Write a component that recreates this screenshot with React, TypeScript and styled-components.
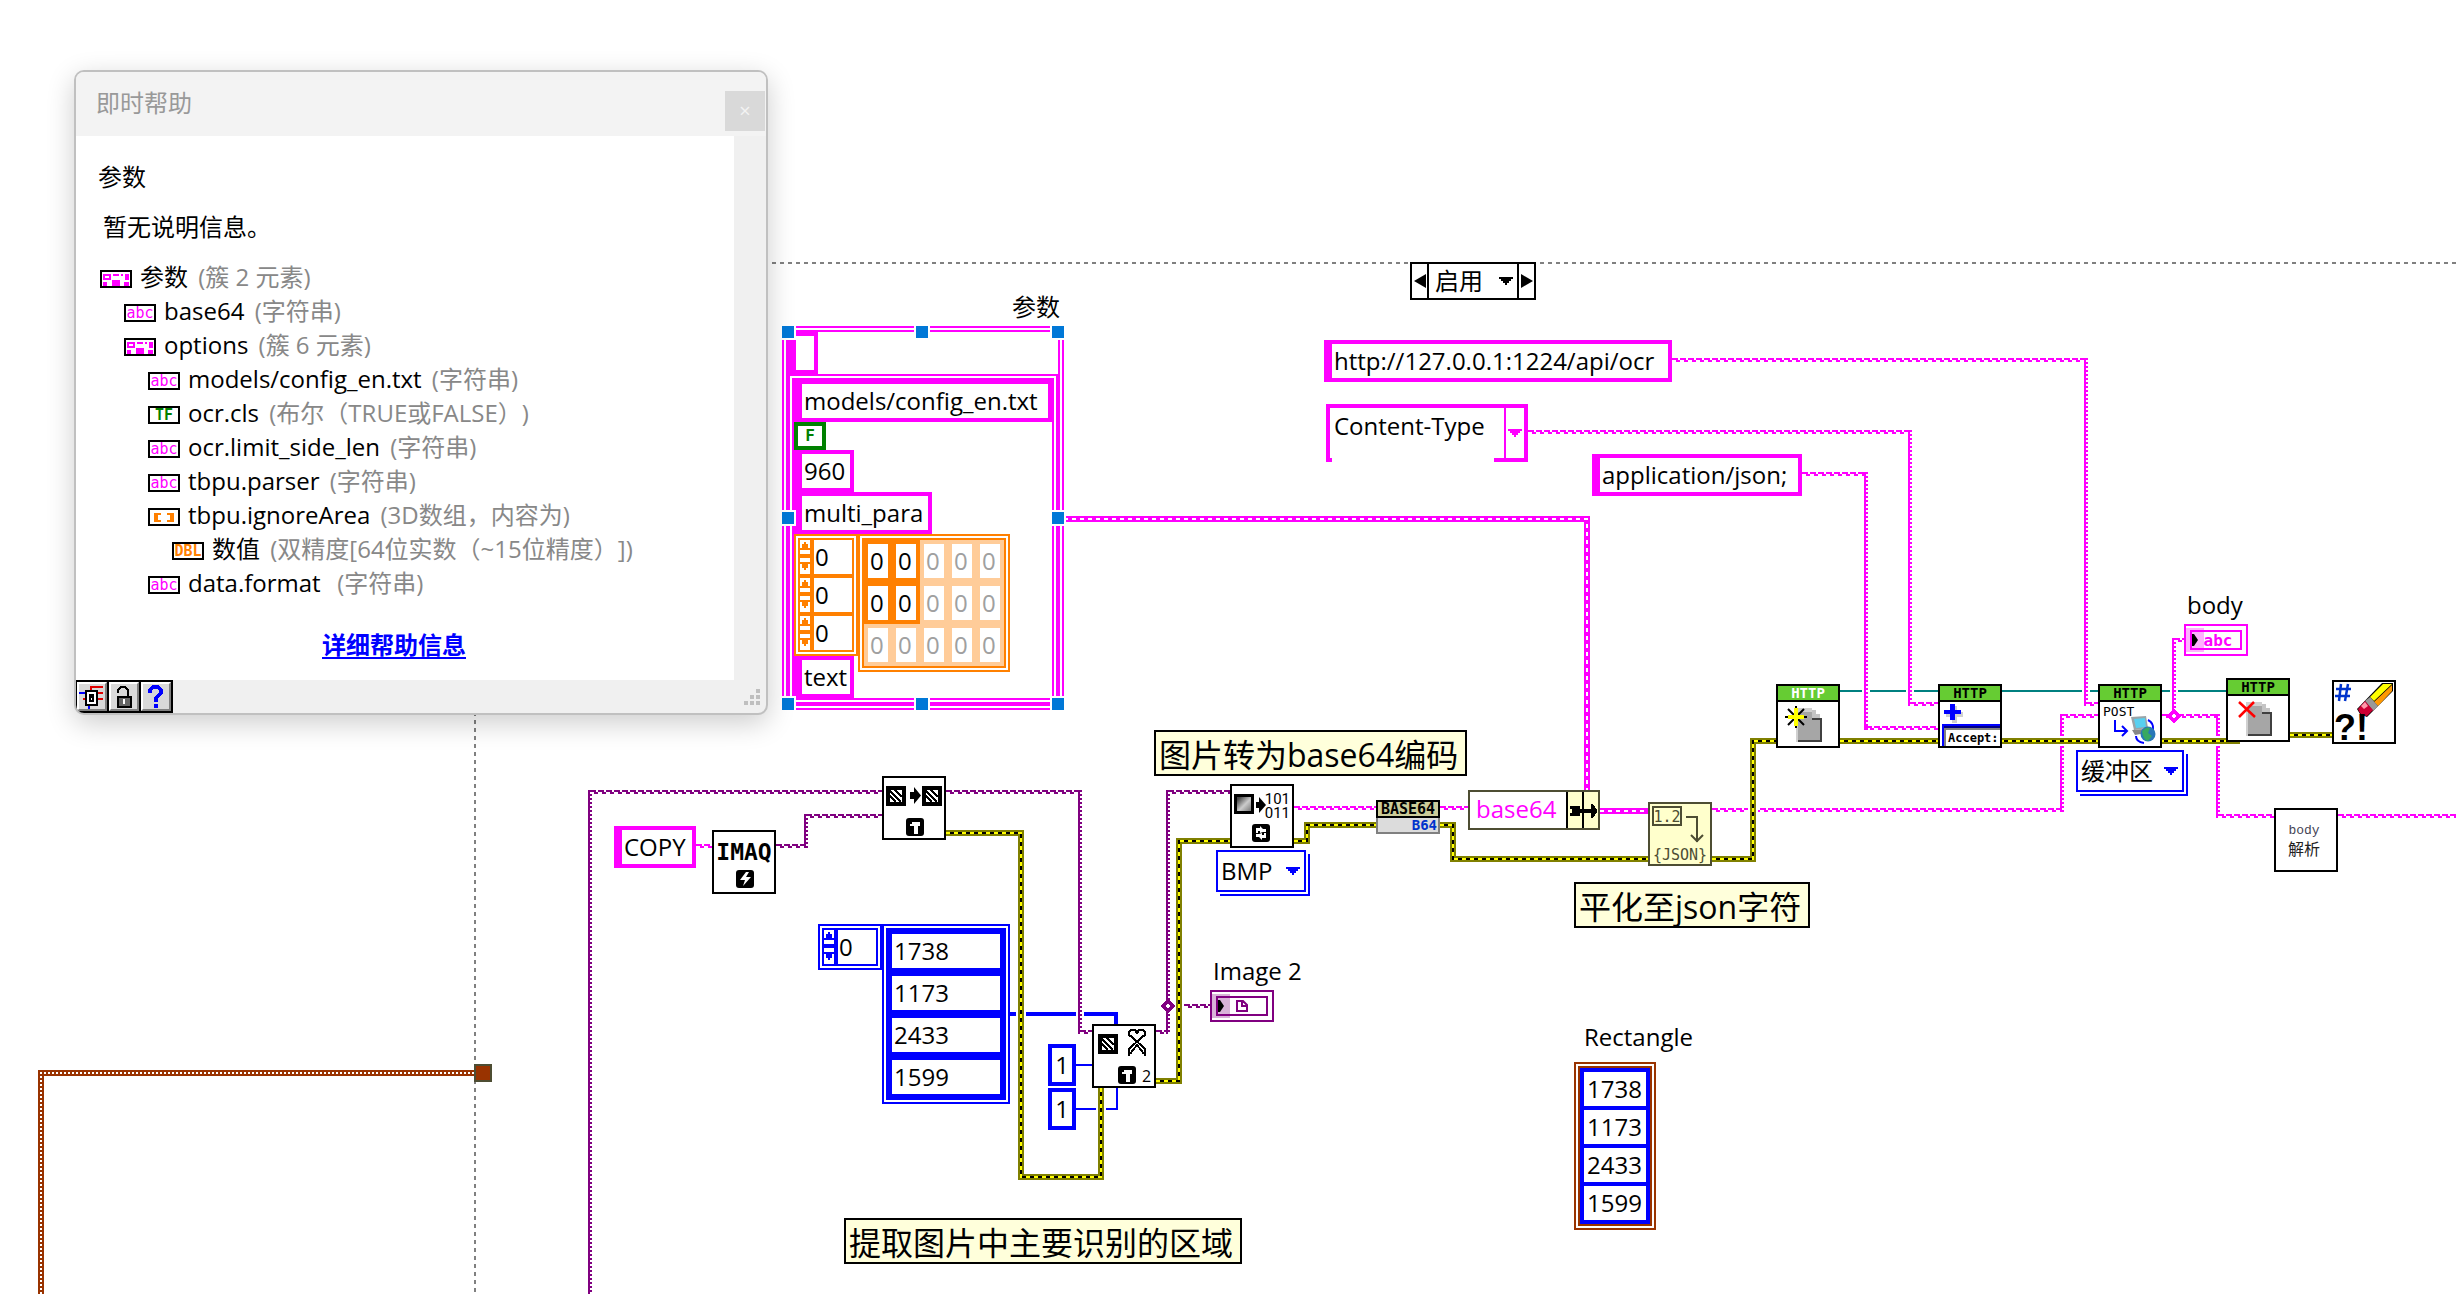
import React from "react";
import styled, { createGlobalStyle } from "styled-components";

const MAGENTA = "#ff00ff";
const PURPLE = "#800080";
const BLUE = "#0000ff";
const ORANGE = "#ff8000";
const PALE_ORANGE = "#ffcc99";
const BROWN = "#993300";
const GREEN = "#008000";
const TEAL = "#008080";
const MONO = '"DejaVu Sans Mono", monospace';

const GlobalStyle = createGlobalStyle`
  * { box-sizing: border-box; }
  body {
    margin: 0;
    background: #fff;
    color: #000;
    font-family: "Open Sans", "Noto Sans CJK SC", sans-serif;
    font-size: 24px;
    line-height: 34px;
    text-spacing-trim: space-all;
  }
  button, input, select { font: inherit; color: inherit; margin: 0; padding: 0; border: 0; background: none; border-radius: 0; }
`;

/* ---------- diagram canvas ---------- */

const Diagram = styled.main`
  position: relative;
  width: 100%;
  min-height: 100vh;
  overflow: hidden;
  background: #fff;
`;

const WireLayer = styled.svg`
  position: absolute;
  inset: 0;
  width: 100%;
  height: 100%;
`;

const Item = styled.div<{ $x: number; $y: number }>`
  position: absolute;
  left: ${(p) => p.$x}px;
  top: ${(p) => p.$y}px;
  white-space: pre;
`;

const Comment = styled.p`
  margin: 0;
  padding: 2px 7px 0 3px;
  height: 46px;
  border: 2px solid #000;
  background: #ffffdb;
  font-size: 32px;
  line-height: 42px;
`;

const StringConst = styled.div<{ $w: number }>`
  width: ${(p) => p.$w}px;
  height: 42px;
  padding: 0 2px;
  border: 4px solid ${MAGENTA};
  border-left-width: 8px;
  background: #fff;
`;

const NumberConst = styled.div`
  width: 28px;
  height: 42px;
  border: 4px solid ${BLUE};
  background: #fff;
  text-align: center;
`;

const BoolConst = styled.div`
  display: flex;
  align-items: center;
  justify-content: center;
  width: 32px;
  height: 28px;
  border: 4px solid ${GREEN};
  color: ${GREEN};
  font: bold 16px/20px ${MONO};
`;

const Cluster = styled.section<{ $w: number; $color: string }>`
  display: flex;
  flex-direction: column;
  align-items: flex-start;
  width: ${(p) => p.$w}px;
  border: 6px double ${(p) => p.$color};
  background: #fff;
`;

const ArrayRow = styled.div`
  display: flex;
  align-items: flex-start;
  height: 122px;
`;

const IndexBox = styled.div<{ $color: string }>`
  display: flex;
  flex-direction: column;
  gap: 4px;
  width: 64px;
  border: 6px double ${(p) => p.$color};
  background: linear-gradient(${(p) => p.$color}, ${(p) => p.$color}) content-box, #fff;
`;

const IndexLine = styled.div`
  display: flex;
  gap: 4px;
  height: 34px;
`;

const Spinner = styled.div`
  display: flex;
  flex-direction: column;
  width: 10px;
  background: #fff;
`;

const SpinButton = styled.button`
  display: block;
  height: 17px;
  svg { display: block; }
`;

const IndexInput = styled.input`
  width: 38px;
  height: 34px;
  padding: 0 1px;
  background: #fff;
  outline: none;
`;

const ArrayGrid = styled.div<{ $cols: number; $w: number; $color: string }>`
  display: grid;
  grid-template-columns: repeat(${(p) => p.$cols}, 1fr);
  width: ${(p) => p.$w}px;
  border: 6px double ${(p) => p.$color};
  background: #fff;
`;

const ArrayCell = styled.div<{ $color: string; $dim?: boolean }>`
  height: 42px;
  padding-left: 2px;
  border: 4px solid ${(p) => p.$color};
  background: #fff;
  color: ${(p) => (p.$dim ? "#a0a0a0" : "#000")};
`;

const RectValues = styled.div`
  display: flex;
  flex-direction: column;
  gap: 4px;
  width: 100%;
  padding: 4px;
  background: ${BLUE};
`;

const RectValue = styled.div`
  height: 34px;
  padding-left: 3px;
  background: #fff;
`;

const Handle = styled.i<{ $x: number; $y: number }>`
  position: absolute;
  left: ${(p) => p.$x}px;
  top: ${(p) => p.$y}px;
  width: 16px;
  height: 16px;
  border: 2px solid #fff;
  background: #0078d7;
`;

const Ring = styled.div<{ $w: number }>`
  width: ${(p) => p.$w}px;
  height: 42px;
  border: 2px solid ${BLUE};
  background: #fff;
  box-shadow: 2px 2px 0 #fff, 4px 4px 0 ${BLUE};
  display: flex;
  align-items: center;
  justify-content: space-between;
  padding: 0 4px 0 3px;
`;

const PlainSelect = styled.select`
  appearance: none;
  flex: 1;
  min-width: 0;
  height: 34px;
  outline: none;
`;

const CaseSelector = styled.div`
  display: flex;
  width: 126px;
  height: 38px;
  border: 2px solid #000;
  background: #fff;
`;

const CaseButton = styled.button`
  display: flex;
  align-items: center;
  justify-content: center;
  width: 15px;
`;

const CaseValue = styled.div`
  display: flex;
  flex: 1;
  align-items: center;
  padding: 0 4px 0 6px;
  border: solid #000;
  border-width: 0 2px;
`;

const Combo = styled.div`
  display: flex;
  width: 202px;
  height: 58px;
  border: 4px solid ${MAGENTA};
  background: #fff;
`;

const ComboText = styled.div`
  flex: 1;
  height: 54px;
  margin: 0 10px 0 2px;
  padding: 0 2px;
  background: #fff;
  line-height: 36px;
`;

const ComboArrow = styled.button`
  display: flex;
  align-items: center;
  justify-content: center;
  width: 20px;
  border-left: 2px solid ${MAGENTA};
`;

const Bundle = styled.div`
  display: flex;
  width: 132px;
  height: 40px;
  border: 2px solid #4d4d33;
  background: #ffffcc;
  color: ${MAGENTA};
  svg { display: block; }
`;

const BundleName = styled.span`
  width: 96px;
  padding-left: 6px;
  background: #fff;
`;

const Icon = styled.svg`
  display: block;
  overflow: visible;
`;

/* ---------- help window ---------- */

const HelpWindow = styled.aside`
  position: absolute;
  left: 74px;
  top: 70px;
  width: 694px;
  border: 2px solid #c0c0c0;
  border-radius: 10px;
  background: #f0f0f0;
  box-shadow: 0 8px 28px rgba(0, 0, 0, 0.2);
  overflow: hidden;
`;

const TitleBar = styled.header`
  display: flex;
  align-items: center;
  justify-content: space-between;
  height: 64px;
  padding: 0 1px 2px 20px;
  background: #f3f3f3;
  color: #999;
`;

const CloseButton = styled.button`
  align-self: flex-end;
  width: 40px;
  height: 40px;
  margin-bottom: 3px;
  background: #d9d9d9;
  color: #f3f3f3;
  font-size: 20px;
  line-height: 36px;
`;

const HelpBody = styled.div`
  display: flex;
  flex-direction: column;
  gap: 16px;
  margin-right: 32px;
  padding: 24px 24px 18px 22px;
  background: #fff;
`;

const HelpLine = styled.p<{ $indent?: number }>`
  margin: 0 0 0 ${(p) => p.$indent ?? 0}px;
`;

const Tree = styled.ul`
  margin: 0;
  padding: 0 0 12px;
  list-style: none;
`;

const TreeRow = styled.li<{ $level: number }>`
  display: flex;
  align-items: center;
  gap: 8px;
  height: 34px;
  padding-left: ${(p) => 2 + p.$level * 24}px;
  white-space: pre;
  svg { margin-top: 4px; }
`;

const Muted = styled.span`
  margin-left: 4px;
  color: #888;
`;

const HelpLink = styled.a`
  align-self: flex-start;
  margin-left: 224px;
  color: ${BLUE};
  font-weight: bold;
  text-underline-offset: 3px;
`;

const HelpFooter = styled.footer`
  display: flex;
  align-items: center;
  justify-content: space-between;
  height: 33px;
  padding-right: 6px;
`;

const Tools = styled.div`
  display: flex;
  gap: 2px;
  height: 33px;
  padding: 2px 2px 2px 1px;
  background: #000;
`;

const ToolButton = styled.button`
  display: flex;
  align-items: center;
  justify-content: center;
  width: 30px;
  border: 2px solid;
  border-color: #fff #808080 #808080 #fff;
  background: #d9d9d9;
`;

/* ---------- wires ---------- */

type Pt = [number, number];
type Kind = "wave" | "solid" | "error" | "dotted" | "cluster";

const Seg = ({ x1, y1, x2, y2, c, w = 2, dash, off }: { x1: number; y1: number; x2: number; y2: number; c: string; w?: number; dash?: string; off?: number }) => (
  <line x1={x1} y1={y1} x2={x2} y2={y2} stroke={c} strokeWidth={w} strokeDasharray={dash} strokeDashoffset={off} />
);

const Wire = ({ kind, pts, color = MAGENTA, width = 2 }: { kind: Kind; pts: Pt[]; color?: string; width?: number }) => {
  const line = pts.map((p) => p.join(",")).join(" ");
  if (kind === "wave") {
    return (
      <g>
        {pts.slice(1).map(([bx, by], i) => {
          const [ax, ay] = pts[i];
          if (ay === by) {
            const l = Math.min(ax, bx);
            const r = Math.max(ax, bx);
            return (
              <g key={i}>
                <Seg x1={l} x2={r} y1={ay - 1} y2={ay - 1} c={color} dash="6 2" />
                <Seg x1={l} x2={r} y1={ay + 1} y2={ay + 1} c={color} dash="4 4" off={4} />
              </g>
            );
          }
          const t = Math.min(ay, by) - 2;
          const b = Math.max(ay, by) + 2;
          return (
            <g key={i}>
              <Seg x1={ax - 1} x2={ax - 1} y1={t} y2={b} c={color} />
              <Seg x1={ax + 1} x2={ax + 1} y1={t} y2={b} c={color} dash="2 2" />
            </g>
          );
        })}
      </g>
    );
  }
  if (kind === "solid") return <polyline points={line} fill="none" stroke={color} strokeWidth={width} />;
  const inner = { error: "#ffff00", dotted: "#fff", cluster: "#fff" }[kind];
  const outer = { error: "#808000", dotted: BROWN, cluster: MAGENTA }[kind];
  return (
    <g fill="none">
      <polyline points={line} stroke={outer} strokeWidth={6} />
      {kind === "error" && <polyline points={line} stroke="#000" strokeWidth={2} />}
      <polyline points={line} stroke={inner} strokeWidth={2} strokeDasharray={kind === "dotted" ? "2 2" : "4 4"} />
    </g>
  );
};

const Gap = ({ x, y, w = 10, h = 10 }: { x: number; y: number; w?: number; h?: number }) => (
  <rect x={x - w / 2} y={y - h / 2} width={w} height={h} fill="#fff" />
);

const Junction = ({ x, y, color }: { x: number; y: number; color: string }) => (
  <path d={`M${x - 5} ${y}L${x} ${y - 5}L${x + 5} ${y}L${x} ${y + 5}Z`} fill="#fff" stroke={color} strokeWidth={3} />
);

const Wires = () => (
  <WireLayer shapeRendering="crispEdges" aria-hidden="true">
    <g stroke="#808080" strokeWidth={2} strokeDasharray="4 4">
      <line x1="476" y1="263" x2="100%" y2="263" />
      <line x1="475" y1="264" x2="475" y2="100%" />
    </g>
    <Wire kind="solid" color={TEAL} pts={[[1840, 691], [2228, 691]]} />
    <Wire kind="solid" color={BLUE} width={4} pts={[[1010, 1014], [1116, 1014], [1116, 1026]]} />
    <Wire kind="solid" color={BLUE} pts={[[1076, 1065], [1092, 1065]]} />
    <Wire kind="solid" color={BLUE} pts={[[1076, 1109], [1117, 1109], [1117, 1088]]} />
    {[1866, 1910, 2086, 2174].map((x) => <Gap key={x} x={x} y={691} w={8} />)}
    <Gap x={1021} y={1014} />
    <Gap x={1080} y={1014} w={8} />
    <Gap x={1101} y={1109} />

    <Wire kind="wave" pts={[[1672, 360], [2086, 360], [2086, 704], [2098, 704]]} />
    <Wire kind="wave" pts={[[1528, 432], [1910, 432], [1910, 704], [1938, 704]]} />
    <Wire kind="wave" pts={[[1802, 474], [1866, 474], [1866, 728], [1938, 728]]} />
    <Wire kind="wave" pts={[[1712, 810], [2062, 810], [2062, 716], [2098, 716]]} />
    <Wire kind="wave" pts={[[2162, 716], [2218, 716], [2218, 816], [2274, 816]]} />
    <Wire kind="wave" pts={[[2338, 816], [6000, 816]]} />
    <Wire kind="wave" pts={[[2174, 716], [2174, 640], [2184, 640]]} />
    <Wire kind="wave" pts={[[1294, 808], [1376, 808]]} />
    <Wire kind="wave" pts={[[1440, 808], [1468, 808]]} />
    <Wire kind="wave" pts={[[696, 846], [712, 846]]} />
    <Junction x={2174} y={716} color={MAGENTA} />
    <Wire kind="wave" color={PURPLE} pts={[[882, 792], [590, 792], [590, 6000]]} />
    <Wire kind="wave" color={PURPLE} pts={[[946, 792], [1080, 792], [1080, 1032], [1092, 1032]]} />
    <Wire kind="wave" color={PURPLE} pts={[[776, 846], [806, 846], [806, 816], [882, 816]]} />
    <Wire kind="wave" color={PURPLE} pts={[[1156, 1032], [1168, 1032], [1168, 792], [1230, 792]]} />
    <Wire kind="wave" color={PURPLE} pts={[[1184, 1006], [1210, 1006]]} />
    <Junction x={1168} y={1006} color={PURPLE} />
    <Wire kind="cluster" pts={[[1064, 519], [1587, 519], [1587, 790]]} />
    <Wire kind="cluster" pts={[[1600, 811], [1648, 811]]} />
    <Wire kind="dotted" pts={[[474, 1073], [41, 1073], [41, 6000]]} />
    <rect x={475} y={1065} width={16} height={16} fill={BROWN} stroke="#4d4d33" strokeWidth={2} />
    <Gap x={2062} y={741} />
    <Gap x={2218} y={741} />
    <Gap x={1753} y={810} />

    <Wire kind="error" pts={[[1840, 741], [2240, 741]]} />
    <Wire kind="error" pts={[[2290, 735], [2332, 735]]} />
    <Wire kind="error" pts={[[1712, 859], [1753, 859], [1753, 741], [1776, 741]]} />
    <Wire kind="error" pts={[[1440, 825], [1453, 825], [1453, 859], [1648, 859]]} />
    <Wire kind="error" pts={[[1294, 841], [1307, 841], [1307, 825], [1376, 825]]} />
    <Wire kind="error" pts={[[1156, 1081], [1179, 1081], [1179, 841], [1230, 841]]} />
    <Wire kind="error" pts={[[946, 833], [1021, 833], [1021, 1177], [1101, 1177], [1101, 1088]]} />
  </WireLayer>
);

/* ---------- node icons ---------- */

const Node = ({ x, y, label, fill = "#fff", stroke = "#000", children }: { x: number; y: number; label: string; fill?: string; stroke?: string; children: React.ReactNode }) => (
  <Item $x={x} $y={y}>
    <Icon width={64} height={64} viewBox="0 0 64 64" role="img" aria-label={label}>
      <rect x={1} y={1} width={62} height={62} fill={fill} stroke={stroke} strokeWidth={2} />
      {children}
    </Icon>
  </Item>
);

const HttpBanner = ({ light }: { light?: boolean }) => (
  <>
    <rect x={2} y={2} width={60} height={14} fill="#66cc33" />
    <rect x={2} y={16} width={60} height={2} fill="#000" />
    <text x={32} y={14} textAnchor="middle" fontFamily={MONO} fontSize={14} fontWeight={700} fill={light ? "#fff" : "#000"}>HTTP</text>
  </>
);

const Doc = () => (
  <g shapeRendering="crispEdges">
    <path d="M20 24h16v2h4v4h4v4h2v24H20z" fill="#d0d0d0" />
    <path d="M22 28h14v8h8v20H22z" fill="#a6a6a6" />
    <path d="M36 34h10v24H22v-2h22V36h-8z" fill="#404040" />
    <path d="M36 26h4v4h4v4h-8z" fill="#c4c4c4" />
  </g>
);

const Hatch = ({ x, y }: { x: number; y: number }) => (
  <g shapeRendering="crispEdges">
    <rect x={x} y={y} width={20} height={20} />
    <rect x={x + 4} y={y + 4} width={12} height={12} fill="#fff" />
    <path d={`M${x + 4} ${y + 10}l6 6M${x + 4} ${y + 5}l11 11M${x + 9} ${y + 4}l7 7`} stroke="#000" strokeWidth={2} />
  </g>
);

const Badge = ({ x, y, d }: { x: number; y: number; d: string }) => (
  <g>
    <rect x={x} y={y} width={18} height={18} rx={3} />
    <path d={d} transform={`translate(${x} ${y})`} fill="#fff" />
  </g>
);

const T_MARK = "M6 4h8v4h-2v8H8V8H4V6h2z";
const BOLT_MARK = "M10 2h3l-3 5h5l-8 9 2-6H4z";
const LOOP_MARK = "M4 4h4V2l3 3h3v3h-3L8 9V7H6v2H4z M14 14h-4v2l-3-3H4v-3h3l3-1v2h2V9h2z";

const Nodes = () => (
  <>
    <Node x={712} y={830} label="IMAQ Create">
      <text x={32} y={30} textAnchor="middle" fontFamily={MONO} fontWeight={700} fontSize={23}>IMAQ</text>
      <Badge x={24} y={40} d={BOLT_MARK} />
    </Node>
    <Node x={882} y={776} label="IMAQ Copy">
      <Hatch x={4} y={10} />
      <path d="M28 16h4v-5l7 8.500l-7 8.500v-5h-4z" />
      <Hatch x={40} y={10} />
      <Badge x={24} y={42} d={T_MARK} />
    </Node>
    <Node x={1092} y={1024} label="IMAQ Extract">
      <Hatch x={6} y={10} />
      <path shapeRendering="crispEdges" d="M37 32v-7l13-12 3-2V8l-2-2h-4l-2 3-2-3h-4l-2 2v3l3 2 13 12v7M41 26l4-5 4 5M38 30l3-4M52 30l-3-4" fill="none" stroke="#000" strokeWidth={2} />
      <Badge x={26} y={42} d={T_MARK} />
      <text x={50} y={58} fontFamily="Open Sans, sans-serif" fontSize={16}>2</text>
    </Node>
    <Node x={1230} y={784} label="Image to bytes">
      <defs>
        <linearGradient id="shade" x1="0" y1="0" x2="1" y2="1">
          <stop offset="0.1" stopColor="#444" />
          <stop offset="0.55" stopColor="#ccc" />
          <stop offset="1" stopColor="#777" />
        </linearGradient>
      </defs>
      <rect x={4} y={10} width={20} height={20} />
      <rect x={7} y={13} width={14} height={14} fill="url(#shade)" />
      <path d="M26 18h3v-5l7 8-7 8v-5h-3z" />
      <text x={60} y={20} textAnchor="end" fontFamily="Roboto, sans-serif" fontSize={15}>101</text>
      <text x={60} y={34} textAnchor="end" fontFamily="Roboto, sans-serif" fontSize={15}>011</text>
      <Badge x={22} y={40} d={LOOP_MARK} />
    </Node>
    <Item $x={1376} $y={800}>
      <Icon width={64} height={34} viewBox="0 0 64 34" role="img" aria-label="Base64 encode">
        <rect x={1} y={1} width={62} height={32} fill="#dcdcdc" stroke="#808080" strokeWidth={2} />
        <rect x={1} y={1} width={62} height={16} fill="#cccc99" stroke="#000" strokeWidth={2} />
        <text x={32} y={14} textAnchor="middle" fontFamily={MONO} fontWeight={700} fontSize={15}>BASE64</text>
        <text x={61} y={30} textAnchor="end" fontFamily={MONO} fontWeight={700} fontSize={14} fill="#0033cc">B64</text>
      </Icon>
    </Item>
    <Node x={1648} y={802} label="Flatten to JSON" fill="#ffffcc" stroke="#4d4d33">
      <rect x={5} y={5} width={28} height={18} fill="none" stroke="#4d4d33" strokeWidth={2} />
      <text x={19} y={20} textAnchor="middle" fontFamily={MONO} fontSize={15} fill="#4d4d33">1.2</text>
      <path d="M38 15h11v25M43 33l6 6 6-6" fill="none" stroke="#4d4d33" strokeWidth={2} />
      <text x={32} y={58} textAnchor="middle" fontFamily={MONO} fontSize={15} fill="#4d4d33">{"{JSON}"}</text>
    </Node>
    <Node x={1776} y={684} label="HTTP open handle">
      <HttpBanner light />
      <Doc />
      <path d="M20 22v22M9 33h22M12 25l16 16M28 25l-16 16" stroke="#000" strokeWidth={2} />
      <path d="M20 24v18M12 33h16" stroke="#ff0" strokeWidth={4} />
    </Node>
    <Node x={1938} y={684} label="HTTP add header">
      <HttpBanner />
      <path d="M14 22h5v6h6v5h-6v6h-5v-6H8v-5h6z" fill="#d0d0d0" />
      <path d="M12 20h5v6h6v4h-6v6h-5v-6H6v-4h6z" fill={BLUE} />
      <path d="M4 62V40h58v4H6v18z" fill={BLUE} />
      <path d="M6 42h56v2H6z" fill="#000080" />
      <path d="M6 62V44h56v2H8v16z" fill="#808080" />
      <text x={10} y={58} fontFamily={MONO} fontWeight={700} fontSize={12}>Accept:</text>
    </Node>
    <Node x={2098} y={684} label="HTTP POST">
      <HttpBanner />
      <text x={5} y={32} fontFamily={MONO} fontSize={13}>POST</text>
      <path d="M17 36v11h11M24 42l5 5-5 5" fill="none" stroke={BLUE} strokeWidth={2} />
      <path d="M33 33l15-1 2 12-14 2z" fill="#9aa4a8" />
      <path d="M36 35l11-1 1 9-10 1z" fill="#58d0f0" />
      <path d="M34 46l12-1 2 4-11 2z" fill="#888" />
      <path d="M50 36q6 3 5 10M38 52q0 6 8 7" fill="none" stroke={BLUE} strokeWidth={2} />
      <circle cx={50} cy={50} r={7.500} fill="#2878b8" />
      <path d="M44 47q4-5 8-3l-2 5 4 3-4 5q-5-1-6-10z" fill="#38a860" />
    </Node>
    <Node x={2226} y={678} label="HTTP close handle">
      <HttpBanner />
      <Doc />
      <path d="M13 24l16 15M28 24l-15 15" stroke="#f00" strokeWidth={2.500} />
    </Node>
    <Node x={2332} y={680} label="Clear errors">
      <path d="M9 4L7 21M16 4l-3 17M4 9h15M3 16h15" stroke="#0033cc" strokeWidth={2.500} />
      <path d="M25 29L50 3h11v8L35 37l-7-3z" fill="#000" />
      <path d="M38 17L51 4h9L42 21z" fill="#ff0" />
      <path d="M42 22L60 5v6L46 26z" fill="#ff9900" />
      <path d="M33 21l5-4 8 9-5 5z" fill="#999" />
      <path d="M26 29l7-8 8 9-6 6q-7 0-9-7z" fill="#cc0033" />
      <path d="M29 26l4-4 3 4-4 3z" fill="#ff99aa" />
      <text x={2} y={60} fontFamily="Liberation Sans, sans-serif" fontWeight={700} fontSize={36}>?!</text>
    </Node>
    <Node x={2274} y={808} label="body 解析">
      <text x={30} y={26} textAnchor="middle" fontFamily="Liberation Mono, monospace" fontSize={13} fill="#445">body</text>
      <text x={30} y={47} textAnchor="middle" fontFamily="Noto Sans CJK SC, sans-serif" fontSize={16} fill="#222">解析</text>
    </Node>
  </>
);

/* ---------- small parts ---------- */

const DownArrow = ({ color }: { color: string }) => (
  <Icon width={14} height={8} viewBox="0 0 14 8" shapeRendering="crispEdges" aria-hidden="true">
    <path d="M0 0h14v2h-2v2h-2v2H8v2H6V6H4V4H2V2H0z" fill={color} />
  </Icon>
);

const Index = ({ color, count, label }: { color: string; count: number; label: string }) => (
  <IndexBox $color={color}>
    {Array.from({ length: count }, (_, i) => (
      <IndexLine key={i}>
        <Spinner>
          <SpinButton aria-label={`${label} ${i} +`}>
            <svg width={10} height={17} shapeRendering="crispEdges"><path d="M4 2h2v2h2v4h2v2H0V8h2V4h2zM0 14h10v3H0z" fill={color} /></svg>
          </SpinButton>
          <SpinButton aria-label={`${label} ${i} -`}>
            <svg width={10} height={17} shapeRendering="crispEdges"><path d="M0 0h10v1H0zM0 5h10v2H8v4H6v2H4v-2H2V7H0z" fill={color} /></svg>
          </SpinButton>
        </Spinner>
        <IndexInput aria-label={`${label} ${i}`} defaultValue="0" />
      </IndexLine>
    ))}
  </IndexBox>
);

const Terminal = ({ x, y, color, children }: { x: number; y: number; color: string; children: React.ReactNode }) => (
  <Item $x={x} $y={y}>
    <Icon width={64} height={32} viewBox="0 0 64 32">
      <rect x={1} y={1} width={62} height={30} fill="#fff" stroke={color} strokeWidth={2} />
      <rect x={7} y={7} width={50} height={18} fill="none" stroke={color} strokeWidth={2} />
      {children}
      <rect x={2} y={4} width={18} height={24} fill={color} opacity={0.3} />
      <path d="M8 10h2l4 6-4 6H8z" />
    </Icon>
  </Item>
);

type IconKind = "cluster" | "abc" | "TF" | "array" | "DBL";

const TypeIcon = ({ kind }: { kind: IconKind }) => {
  const color = { cluster: MAGENTA, abc: MAGENTA, TF: GREEN, array: ORANGE, DBL: ORANGE }[kind];
  return (
    <Icon width={32} height={18} viewBox="0 0 32 18" aria-hidden="true">
      <rect x={1} y={1} width={30} height={16} fill="#fff" stroke="#000" strokeWidth={2} />
      {kind === "cluster" && <path shapeRendering="crispEdges" d="M3 4h8v6H3zM5 6v2h4V6zM13 4h6v2h-6zM21 4h2v2h-2zM25 4h4v6h-4zM3 12h4v4H3zM12 10h8v6h-8zM24 12h5v4h-5z" fillRule="evenodd" fill={color} />}
      {kind === "array" && <path shapeRendering="crispEdges" d="M6 5h7v2h-3v5h3v2H6zM26 5h-7v2h3v5h-3v2h7z" fill={color} />}
      {kind !== "cluster" && kind !== "array" && (
        <text x={16} y={14} textAnchor="middle" fontFamily={MONO} fontSize={15} fontWeight={kind === "abc" ? 400 : 700} fill={color}>{kind}</text>
      )}
    </Icon>
  );
};

const TREE: [number, IconKind, string, string][] = [
  [0, "cluster", "参数 ", "(簇 2 元素)"],
  [1, "abc", "base64 ", "(字符串)"],
  [1, "cluster", "options ", "(簇 6 元素)"],
  [2, "abc", "models/config_en.txt ", "(字符串)"],
  [2, "TF", "ocr.cls ", "(布尔（TRUE或FALSE）)"],
  [2, "abc", "ocr.limit_side_len ", "(字符串)"],
  [2, "abc", "tbpu.parser ", "(字符串)"],
  [2, "array", "tbpu.ignoreArea ", "(3D数组，内容为)"],
  [3, "DBL", "数值 ", "(双精度[64位实数（~15位精度）])"],
  [2, "abc", "data.format  ", "(字符串)"],
];

const Help = () => (
  <HelpWindow>
    <TitleBar>
      即时帮助
      <CloseButton aria-label="关闭">×</CloseButton>
    </TitleBar>
    <HelpBody>
      <HelpLine>参数</HelpLine>
      <HelpLine $indent={5}>暂无说明信息。</HelpLine>
      <Tree>
        {TREE.map(([level, kind, name, type]) => (
          <TreeRow key={name} $level={level}>
            <TypeIcon kind={kind} />
            <span>{name}<Muted>{type}</Muted></span>
          </TreeRow>
        ))}
      </Tree>
      <HelpLink href="#help">详细帮助信息</HelpLink>
    </HelpBody>
    <HelpFooter>
      <Tools>
        <ToolButton aria-label="显示可选接线端">
          <svg width={26} height={26} shapeRendering="crispEdges" fill="none" strokeWidth={2}>
            <path d="M0 9h8M10 22v3" stroke={BLUE} />
            <path d="M12 6V3h12M16 9h8M4 15h6M16 15h8" stroke="#e00000" />
            <path d="M7 7h11v14H7z" fill="#fff" stroke="#000" />
            <path d="M11 10v8M11 11h3v2h-3M11 17h3v-3" stroke="#000" />
          </svg>
        </ToolButton>
        <ToolButton aria-label="锁定帮助">
          <svg width={20} height={24} shapeRendering="crispEdges">
            <path d="M4 8V5l3-3h4l3 3v6" fill="none" stroke="#000" strokeWidth={2} />
            <rect x={4} y={12} width={13} height={10} fill="#666" stroke="#000" strokeWidth={2} />
            <path d="M9 14h2v5H9z" fill="#fff" />
          </svg>
        </ToolButton>
        <ToolButton aria-label="详细帮助信息">
          <svg width={18} height={24} shapeRendering="crispEdges">
            <path d="M3 8V5l3-3h5l3 3v3l-5 5v4" fill="none" stroke={BLUE} strokeWidth={4} />
            <rect x={7} y={19} width={4} height={4} fill={BLUE} />
          </svg>
        </ToolButton>
      </Tools>
      <svg width={16} height={16} shapeRendering="crispEdges" aria-hidden="true">
        <path d="M12 0h4v4h-4zM6 6h4v4H6zM12 6h4v4h-4zM0 12h4v4H0zM6 12h4v4H6zM12 12h4v4h-4z" fill="#bfbfbf" />
      </svg>
    </HelpFooter>
  </HelpWindow>
);

const HANDLES: Pt[] = [[780, 324], [914, 324], [1050, 324], [780, 510], [1050, 510], [780, 696], [914, 696], [1050, 696]];
const VALUES = ["1738", "1173", "2433", "1599"];

export default function App() {
  return (
    <Diagram>
      <GlobalStyle />
      <Wires />
      <Nodes />

      <Item $x={1410} $y={262}>
        <CaseSelector>
          <CaseButton aria-label="上一分支">
            <svg width={12} height={14}><path d="M12 0v14L0 7z" /></svg>
          </CaseButton>
          <CaseValue>
            <PlainSelect aria-label="分支" defaultValue="启用"><option>启用</option></PlainSelect>
            <DownArrow color="#000" />
          </CaseValue>
          <CaseButton aria-label="下一分支">
            <svg width={12} height={14}><path d="M0 0v14L12 7z" /></svg>
          </CaseButton>
        </CaseSelector>
      </Item>

      <Item $x={1012} $y={290}>参数</Item>
      <Item $x={782} $y={326}>
        <Cluster $w={282} $color={MAGENTA}>
          <StringConst $w={30} />
          <Cluster $w={270} $color={MAGENTA}>
            <StringConst $w={258}>models/config_en.txt</StringConst>
            <BoolConst>F</BoolConst>
            <StringConst $w={60}>960</StringConst>
            <StringConst $w={138}>multi_para</StringConst>
            <ArrayRow>
              <Index color={ORANGE} count={3} label="ignoreArea" />
              <ArrayGrid $cols={5} $w={152} $color={ORANGE}>
                {Array.from({ length: 15 }, (_, i) => {
                  const set = i % 5 < 2 && i < 10;
                  return <ArrayCell key={i} $color={set ? ORANGE : PALE_ORANGE} $dim={!set}>0</ArrayCell>;
                })}
              </ArrayGrid>
            </ArrayRow>
            <StringConst $w={60}>text</StringConst>
          </Cluster>
        </Cluster>
      </Item>
      {HANDLES.map(([x, y]) => <Handle key={`${x}-${y}`} $x={x} $y={y} />)}

      <Item $x={1324} $y={340}><StringConst $w={348}>http://127.0.0.1:1224/api/ocr</StringConst></Item>
      <Item $x={1326} $y={404}>
        <Combo>
          <ComboText>Content-Type</ComboText>
          <ComboArrow aria-label="Content-Type"><DownArrow color={MAGENTA} /></ComboArrow>
        </Combo>
      </Item>
      <Item $x={1592} $y={454}><StringConst $w={210}>application/json;</StringConst></Item>
      <Item $x={614} $y={826}><StringConst $w={82}>COPY</StringConst></Item>

      <Item $x={1154} $y={730}><Comment>图片转为base64编码</Comment></Item>
      <Item $x={1574} $y={882}><Comment>平化至json字符</Comment></Item>
      <Item $x={844} $y={1218}><Comment>提取图片中主要识别的区域</Comment></Item>

      <Item $x={1216} $y={850}>
        <Ring $w={90}>
          <PlainSelect aria-label="格式" defaultValue="BMP"><option>BMP</option></PlainSelect>
          <DownArrow color={BLUE} />
        </Ring>
      </Item>
      <Item $x={2076} $y={750}>
        <Ring $w={108}>
          <PlainSelect aria-label="输出" defaultValue="缓冲区"><option>缓冲区</option></PlainSelect>
          <DownArrow color={BLUE} />
        </Ring>
      </Item>

      <Item $x={1468} $y={790}>
        <Bundle>
          <BundleName>base64</BundleName>
          <svg width={32} height={36} shapeRendering="crispEdges">
            <path d="M0 0h2v36H0zM16 0h2v36h-2z" fill="#000" />
            <path d="M4 14h10v3h11v-5h2l4 6v2l-4 6h-2v-5H14v3H4z" fill="#000" />
            <path d="M4 17h2v4H4z" fill="#ffffcc" />
          </svg>
        </Bundle>
      </Item>

      <Item $x={2187} $y={588}>body</Item>
      <Terminal x={2184} y={624} color={MAGENTA}>
        <text x={34} y={22} textAnchor="middle" fontFamily={MONO} fontWeight={700} fontSize={16} fill={MAGENTA}>abc</text>
      </Terminal>
      <Item $x={1213} $y={954}>Image 2</Item>
      <Terminal x={1210} y={990} color={PURPLE}>
        <path d="M27 11h6l4 4v6H27zM32 11v5h5" fill="none" stroke={PURPLE} strokeWidth={2} />
      </Terminal>

      <Item $x={818} $y={924}><Index color={BLUE} count={1} label="区域" /></Item>
      <Item $x={882} $y={924}>
        <ArrayGrid $cols={1} $w={128} $color={BLUE}>
          {VALUES.map((v) => <ArrayCell key={v} $color={BLUE}>{v}</ArrayCell>)}
        </ArrayGrid>
      </Item>
      <Item $x={1048} $y={1044}><NumberConst>1</NumberConst></Item>
      <Item $x={1048} $y={1088}><NumberConst>1</NumberConst></Item>

      <Item $x={1584} $y={1020}>Rectangle</Item>
      <Item $x={1574} $y={1062}>
        <Cluster $w={82} $color={BROWN}>
          <RectValues>
            {VALUES.map((v) => <RectValue key={v}>{v}</RectValue>)}
          </RectValues>
        </Cluster>
      </Item>

      <Help />
    </Diagram>
  );
}
